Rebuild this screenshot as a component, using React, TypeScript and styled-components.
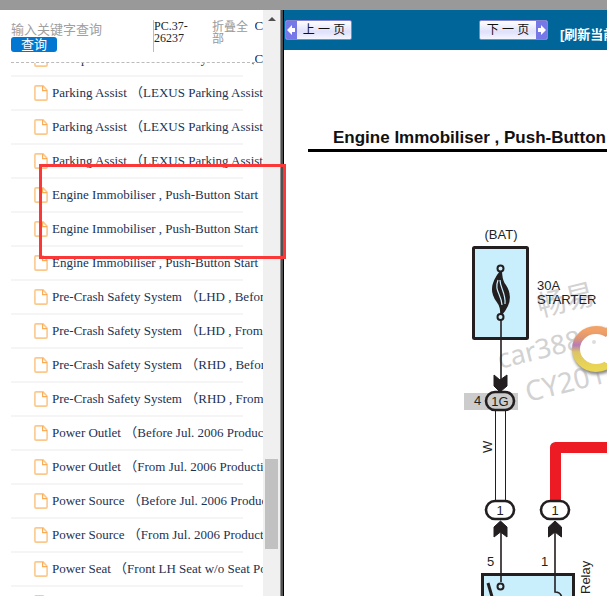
import React from "react";
import styled, { createGlobalStyle } from "styled-components";

const serif = `"Liberation Serif", "Noto Sans CJK SC", serif`;
const sans = `"Liberation Sans", "Noto Sans CJK SC", sans-serif`;
const ink = "#231f20";

const GlobalStyle = createGlobalStyle`
  * { box-sizing: border-box; }
  html, body { margin: 0; height: 100%; overflow: hidden; background: #fff; }
  button, input { font: inherit; }
`;

const Page = styled.div`
  position: relative;
  display: grid;
  grid-template-columns: 280px 4px minmax(0, 1fr);
  grid-template-rows: 10px minmax(0, 1fr);
  height: 100vh;
  overflow: hidden;
`;
const TopStrip = styled.div`
  grid-column: 1 / -1;
  background: #999;
`;
const Sidebar = styled.aside`
  display: grid;
  grid-template-columns: minmax(0, 1fr) 17px;
  min-height: 0;
  overflow: hidden;
`;
const ListPane = styled.div`
  position: relative;
  overflow: hidden;
  padding-left: 11px;
`;
const SearchPanel = styled.form`
  position: absolute;
  top: 0;
  left: 11px;
  right: 8px;
  display: grid;
  grid-template-columns: 142px 59px 36px;
  height: 53px;
  padding-top: 10px;
  border-bottom: 1px dashed #bbb;
  background: #fff;
  color: #222;
  font-family: ${serif};
  font-size: 12px;
  line-height: 12px;
`;
const SearchBox = styled.div`
  display: flex;
  flex-direction: column;
  align-items: flex-start;
`;
const SearchInput = styled.input`
  width: 132px;
  height: 17px;
  padding: 2px 0 0;
  border: 0;
  outline: 0;
  background: none;
  font-family: ${sans};
  font-size: 13px;
  line-height: 15px;
  &::placeholder { color: #a0a0a0; opacity: 1; }
`;
const SearchButton = styled.button`
  width: 46px;
  height: 15px;
  padding: 0;
  border: 0;
  border-radius: 3px;
  background: #0177d2;
  color: #fff;
  font-family: ${sans};
  font-size: 13px;
  line-height: 14px;
`;
const Code = styled.div`
  height: 32px;
  border-left: 1px solid #bbb;
  width: 40px;
`;
const CollapseLink = styled.a`
  color: #999;
  font-family: ${sans};
  text-decoration: none;
  padding-top: 1px;
`;
const List = styled.ul`
  margin: 0;
  padding: 0;
  list-style: none;
  width: 232px;
`;
const Item = styled.li`
  display: flex;
  align-items: center;
  height: 34px;
  padding-left: 23px;
  border-bottom: 2px solid #f5f5f5;
  &:first-child { height: 33px; }
`;
const ItemLink = styled.a`
  display: flex;
  align-items: center;
  gap: 4px;
  color: #1d3152;
  font-family: ${serif};
  font-size: 13px;
  line-height: 16px;
  white-space: nowrap;
  text-decoration: none;
`;
const FileIcon = () => (
  <svg width="14" height="16" viewBox="0 0 14 16" fill="none" stroke="#fbc88d" strokeWidth="1.6">
    <path d="M2 .9H9L13.1 5.2V14Q13.1 15.1 12 15.1H2Q.9 15.1 .9 14V2Q.9 .9 2 .9Z" />
    <path d="M8.6 1V5.6H13" stroke="#f9ad56" strokeWidth="1.2" />
  </svg>
);
const Scrollbar = styled.div`
  display: grid;
  grid-template-rows: 17px minmax(0, 1fr);
  background: #f0f0f0;
`;
const ScrollUp = styled.button`
  padding: 0;
  border: 0;
  background: none;
  display: grid;
  place-items: center;
`;
const Track = styled.div`
  display: grid;
  grid-template-rows: 76% 90px;
  justify-content: center;
`;
const Thumb = styled.div`
  grid-row: 2;
  width: 13px;
  background: #c1c1c1;
`;
const Divider = styled.div`
  border-left: 1px solid #909090;
  border-right: 1px solid #000;
  background: #505050;
`;
const Main = styled.main`
  min-width: 0;
  overflow: hidden;
  background: #fff;
`;
const Toolbar = styled.nav`
  display: flex;
  align-items: center;
  height: 40px;
  padding-left: 1px;
  background: #069;
  font-family: ${sans};
`;
const PageButton = styled.button<{ $next?: boolean }>`
  display: flex;
  flex-direction: ${(p) => (p.$next ? "row-reverse" : "row")};
  flex: none;
  width: ${(p) => (p.$next ? 69 : 67)}px;
  height: 20px;
  margin-right: ${(p) => (p.$next ? 12 : 127)}px;
  padding: 0;
  overflow: hidden;
  border: 1px solid #8583d2;
  border-radius: 2px;
  background: linear-gradient(#fff, #dfe0fb 60%, #f6f6ff);
  color: #111;
  font-size: 12px;
  line-height: 19px;
  span { flex: 1; white-space: nowrap; }
  svg { background: #7678e8; }
`;
const RefreshLink = styled.a`
  padding-top: 10px;
  color: #fff;
  font-size: 13px;
  font-weight: bold;
  line-height: 16px;
  white-space: nowrap;
  text-decoration: none;
`;
const Title = styled.h1`
  margin: 77px 0 0 24px;
  padding-left: 25px;
  border-bottom: 3px solid #000;
  color: #111;
  font-family: ${sans};
  font-size: 17px;
  line-height: 22px;
  white-space: nowrap;
`;
const Diagram = styled.svg`
  display: block;
  font-family: ${sans};
`;
const Highlight = styled.div`
  position: absolute;
  left: 39px;
  top: 164px;
  width: 247px;
  height: 95px;
  border: 3px solid #fb3838;
  pointer-events: none;
`;

const items = [
  "Multiplex Communication System \u00a0\u00a0（CAN）",
  "Multiplex Communication System \u00a0\u00a0（CAN）",
  "Parking Assist （LEXUS Parking Assist Monitor）",
  "Parking Assist （LEXUS Parking Assist Monitor）",
  "Parking Assist （LEXUS Parking Assist Sensor）",
  "Engine Immobiliser , Push-Button Start",
  "Engine Immobiliser , Push-Button Start",
  "Engine Immobiliser , Push-Button Start",
  "Pre-Crash Safety System （LHD , Before Jul. 2006）",
  "Pre-Crash Safety System （LHD , From Jul. 2006）",
  "Pre-Crash Safety System （RHD , Before Jul. 2006）",
  "Pre-Crash Safety System （RHD , From Jul. 2006）",
  "Power Outlet （Before Jul. 2006 Production）",
  "Power Outlet （From Jul. 2006 Production）",
  "Power Source （Before Jul. 2006 Production）",
  "Power Source （From Jul. 2006 Production）",
  "Power Seat （Front LH Seat w/o Seat Position）",
  "Power Seat （Front RH Seat w/o Seat Position）",
];

const Arrow = ({ flip }: { flip?: boolean }) => (
  <svg width="11" height="18" viewBox="0 0 11 18">
    <path fill="#fff" d={flip ? "M2 7H5V4L10 9L5 14V11H2Z" : "M9 7H6V4L1 9L6 14V11H9Z"} />
  </svg>
);

const Connector = ({ x, y, label }: { x: number; y: number; label: string }) => (
  <g>
    <rect x={x - 14} y={y - 9} width="28" height="18" rx="9" fill={label === "1G" ? "#ccc" : "#fff"} stroke={ink} strokeWidth="2.6" />
    <text x={x} y={y + 5} textAnchor="middle" fontSize="13" fill={ink}>{label}</text>
  </g>
);

const Wiring = () => (
  <Diagram width="800" height="600" viewBox="284 152 800 600" role="img" aria-label="Wiring diagram">
    <defs>
      <linearGradient id="ring" x1="0" y1="0" x2="0" y2="1">
        <stop offset="0" stopColor="#f3a267" />
        <stop offset=".22" stopColor="#dc9675" />
        <stop offset=".4" stopColor="#b77abb" />
        <stop offset=".58" stopColor="#dcc567" />
        <stop offset="1" stopColor="#ead653" />
      </linearGradient>
      <filter id="soft" x="-20%" y="-20%" width="140%" height="140%">
        <feGaussianBlur stdDeviation="1.5" />
      </filter>
    </defs>
    <g fill="#d2d2d2" fontFamily='"Noto Sans", "Noto Sans CJK SC", sans-serif'>
      <text transform="translate(540 317) rotate(-14)" fontSize="29">畅易</text>
      <text transform="translate(500 369) rotate(-14)" fontSize="27">car388.com</text>
      <text transform="translate(528 402) rotate(-14)" fontSize="28">CY2018</text>
    </g>
    <ellipse cx="597" cy="351" rx="20" ry="19" fill="none" stroke="#888" strokeWidth="9" filter="url(#soft)" />
    <ellipse cx="596" cy="349" rx="20" ry="19" fill="#fff" stroke="url(#ring)" strokeWidth="8" />
    <path d="M594 342L603 339Q607 334 620 333V364L606 363Q598 357 594 342" fill="#fff" />
    <circle cx="594" cy="342" r="2" fill="#ddd" />
    <g fill="none" stroke={ink} strokeWidth="1.6">
      <rect x="473.5" y="247.5" width="54" height="91" rx="1" fill="#caeffc" strokeWidth="3" />
      <path d="M501 320V380" />
      <path d="M501 271C490 284 491 293 497 301C501 306 501 310 501 315C511 304 511 294 505 285C501 280 502 276 501 271Z" fill={ink} strokeWidth="1.6" />
      <path d="M498 280C494 291 501 293 502 305" stroke="#caeffc" strokeWidth="1.2" />
      <path d="M500 280C500 288 506 293 505 304" stroke="#caeffc" strokeWidth="1.2" />
      <circle cx="500.500" cy="268.500" r="3" fill="#caeffc" strokeWidth="2" />
      <circle cx="500.500" cy="317" r="3" fill="#caeffc" strokeWidth="2" />
      <path d="M500 392L494 386V375L500 380L507 375V386Z" fill={ink} strokeWidth="1" />
      <rect x="464" y="393" width="54" height="17" fill="#ccc" stroke="none" />
      <path d="M495.500 410V501M505.500 410V501" strokeWidth="1" />
      <path d="M555.500 500V447.500H1084" stroke="#ed1c24" strokeWidth="11" strokeLinejoin="round" />
      <rect x="482.500" y="574.500" width="91" height="150" fill="#caeffc" strokeWidth="3" />
      <path d="M501 522V582M555 522V592Q562 592 562 600" />
      <circle cx="500.500" cy="586.500" r="3" strokeWidth="2" />
      <path d="M488 583L493 600" strokeWidth="3" />
      <path d="M500.500 521L494 527V537L500.500 532L507 537V527Z" fill={ink} strokeWidth="1" />
      <path d="M555 521L548.500 527V537L555 532L561.500 537V527Z" fill={ink} strokeWidth="1" />
    </g>
    <Connector x={500} y={401} label="1G" />
    <Connector x={500} y={510} label="1" />
    <Connector x={555} y={510} label="1" />
    <g fill={ink} fontSize="13">
      <text x="501" y="239" textAnchor="middle">(BAT)</text>
      <text x="537" y="290">30A</text>
      <text x="537" y="304">STARTER</text>
      <text x="474" y="405">4</text>
      <text x="487" y="566">5</text>
      <text x="541" y="566">1</text>
      <text transform="translate(492 453) rotate(-90)">W</text>
      <text transform="translate(590 594) rotate(-90)">Relay</text>
    </g>
  </Diagram>
);

export default function App() {
  return (
    <Page>
      <GlobalStyle />
      <TopStrip />
      <Sidebar>
        <ListPane>
          <List>
            {items.map((text, i) => (
              <Item key={i}>
                <ItemLink href="#"><FileIcon />{text}</ItemLink>
              </Item>
            ))}
          </List>
          <SearchPanel>
            <SearchBox>
              <SearchInput aria-label="输入关键字查询" placeholder="输入关键字查询" />
              <SearchButton type="button">查询</SearchButton>
            </SearchBox>
            <Code>PC.37-26237</Code>
            <CollapseLink href="#">折叠全部</CollapseLink>
          </SearchPanel>
        </ListPane>
        <Scrollbar>
          <ScrollUp aria-label="Scroll up">
            <svg width="8" height="4" viewBox="0 0 8 4"><path d="M0 4L4 0L8 4Z" fill="#505050" /></svg>
          </ScrollUp>
          <Track><Thumb /></Track>
        </Scrollbar>
      </Sidebar>
      <Divider />
      <Main>
        <Toolbar>
          <PageButton><Arrow /><span>上 一 页</span></PageButton>
          <PageButton $next><Arrow flip /><span>下 一 页</span></PageButton>
          <RefreshLink href="#">[刷新当前页]</RefreshLink>
        </Toolbar>
        <Title>Engine Immobiliser , Push-Button Start System</Title>
        <Wiring />
      </Main>
      <Highlight />
    </Page>
  );
}
